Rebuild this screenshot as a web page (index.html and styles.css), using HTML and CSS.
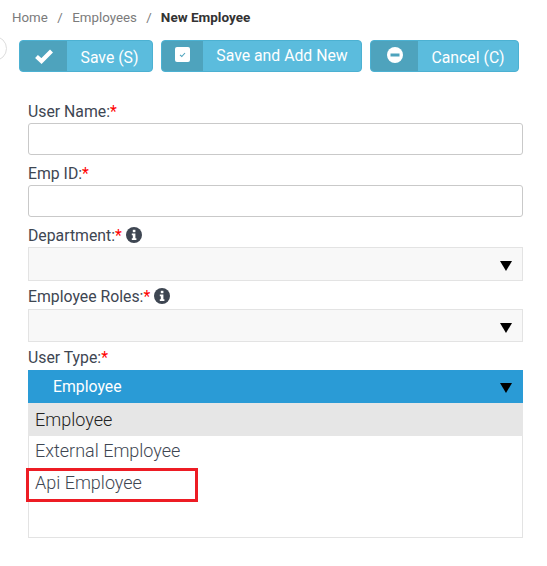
FILE: index.html
```html
<!DOCTYPE html>
<html lang="en">
<head>
<meta charset="utf-8">
<title>New Employee</title>
<link rel="stylesheet" href="styles.css">
</head>
<body>
<div class="page">
  <nav class="crumbs">
    <span>Home</span><span class="sep">/</span><span>Employees</span><span class="sep">/</span><b>New Employee</b>
  </nav>
  <span class="edge-circle"></span>
  <div class="actions">
    <button class="btn btn-save"><span class="ico"><svg width="20" height="16" viewBox="0 0 20 16"><path d="M2.500 8.500 7.500 13 17.500 3" fill="none" stroke="#fff" stroke-width="4.200"/></svg></span><span class="txt">Save (S)</span></button>
    <button class="btn btn-add"><span class="ico"><svg width="15" height="15" viewBox="0 0 15 15"><rect width="15" height="15" rx="2" fill="#fff"/><path d="M5 7.800 6.800 9.500 10 6" fill="none" stroke="#4ea3bd" stroke-width="1.100"/></svg></span><span class="txt">Save and Add New</span></button>
    <button class="btn btn-cancel"><span class="ico"><svg width="16" height="16" viewBox="0 0 16 16"><circle cx="8" cy="8" r="8" fill="#fff"/><rect x="3.500" y="6.500" width="9" height="3" fill="#4ea3bd"/></svg></span><span class="txt">Cancel (C)</span></button>
  </div>
  <form class="form">
    <div class="label l-first">User Name:<i>*</i></div>
    <div class="input"></div>
    <div class="label">Emp ID:<i>*</i></div>
    <div class="input"></div>
    <div class="label">Department:<i>*</i><svg class="info" width="16" height="16" viewBox="0 0 16 16"><circle cx="8" cy="8" r="8" fill="#3e4652"/><rect x="6.800" y="2.800" width="2.600" height="2.400" fill="#fff"/><path d="M5.800 6.600h3.600v4.700h1v1.600H5.800v-1.600h1V8.200h-1z" fill="#fff"/></svg></div>
    <div class="select s-tall"><span class="arrow"></span></div>
    <div class="label">Employee Roles:<i>*</i><svg class="info" width="16" height="16" viewBox="0 0 16 16"><circle cx="8" cy="8" r="8" fill="#3e4652"/><rect x="6.800" y="2.800" width="2.600" height="2.400" fill="#fff"/><path d="M5.800 6.600h3.600v4.700h1v1.600H5.800v-1.600h1V8.200h-1z" fill="#fff"/></svg></div>
    <div class="select"><span class="arrow"></span></div>
    <div class="label">User Type:<i>*</i></div>
    <div class="open-head">Employee<span class="arrow"></span></div>
    <ul class="list">
      <li class="active">Employee</li>
      <li>External Employee</li>
      <li class="marked">Api Employee<span class="mark"></span></li>
    </ul>
  </form>
</div>
</body>
</html>
```
FILE: styles.css
```css
* { box-sizing: border-box; }
html, body { margin: 0; background: #fff; }
body { font-family: Roboto, "Liberation Sans", sans-serif; color: #3e4652; }
.page { position: relative; width: 547px; height: 566px; overflow: hidden; }
.crumbs { display: flex; align-items: center; height: 18px; margin-top: 8px; padding-left: 12px; font-size: 13.300px; color: #7b7b7b; }
.crumbs .sep { margin: 0 9.500px; }
.crumbs span:nth-child(4) { margin-right: 9px; }
.crumbs b { font-weight: 700; font-size: 13.500px; color: #333; }
.edge-circle { position: absolute; left: -18px; top: 36px; width: 25px; height: 25px; border: 1px solid #ddd; border-radius: 50%; background: #fff; }
.actions { display: flex; gap: 8px; margin-top: 14px; padding-left: 19px; }
.btn { display: flex; align-items: stretch; height: 32px; padding: 0; border: 1px solid #4cb1d2; border-radius: 4px; background: #5bbcdd; color: #fff; font: 400 15.800px Roboto, sans-serif; overflow: hidden; }
.ico { display: flex; align-items: center; justify-content: center; background: #4ea3bd; }
.txt { flex: 1; text-align: center; }
.btn-save { width: 134px; }
.btn-save .ico { width: 47px; }
.btn-save .txt, .btn-cancel .txt { padding-top: 7px; }
.btn-add { width: 201px; }
.btn-add .ico { width: 41px; }
.btn-add .ico svg { margin-top: -3px; }
.btn-add .txt { padding-top: 5px; }
.btn-cancel { width: 149px; }
.btn-cancel .ico { width: 47px; }
.btn-cancel .ico svg { margin-top: -2px; }
.form { width: 495px; margin-left: 28px; margin-top: 27px; }
.label { display: flex; align-items: center; height: 22px; margin-top: 6px; margin-bottom: 2px; padding-top: 2px; font-size: 15.800px; color: #3e4652; }
.l-first { margin-top: 0; margin-bottom: 0; height: 24px; padding-top: 0; }
.select + .label { margin-top: 4px; padding-top: 0; }
.label i { font-style: normal; color: #f00; }
.info { margin-left: 4px; }
.input { height: 32px; border: 1px solid #c9c9c9; border-radius: 3px; background: #fff; }
.select { position: relative; height: 33px; border: 1px solid #e3e3e3; background: #f8f8f8; }
.s-tall { height: 34px; }
.arrow { position: absolute; right: 10px; top: 13px; width: 0; height: 0; border-left: 6px solid transparent; border-right: 6px solid transparent; border-top: 10px solid #000; }
.open-head { position: relative; height: 33px; padding-left: 25px; background: #2a9bd6; color: #fff; font-size: 15.800px; line-height: 33px; }
.open-head .arrow { right: 11px; top: 13px; }
.list { margin: 0; padding: 0; height: 135px; list-style: none; border: 1px solid #e3e3e3; border-top: 0; font-size: 18px; font-weight: 300; color: #3e4652; }
.list li { position: relative; height: 33px; margin-left: -1px; margin-right: -1px; padding-left: 7px; line-height: 33px; }
.list li + li { height: 32px; line-height: 30px; }
.list .active { background: #e6e6e6; color: #222; }
.mark { position: absolute; left: -2px; top: 0; width: 172px; height: 34px; border: 3px solid #ed1c24; }
```
